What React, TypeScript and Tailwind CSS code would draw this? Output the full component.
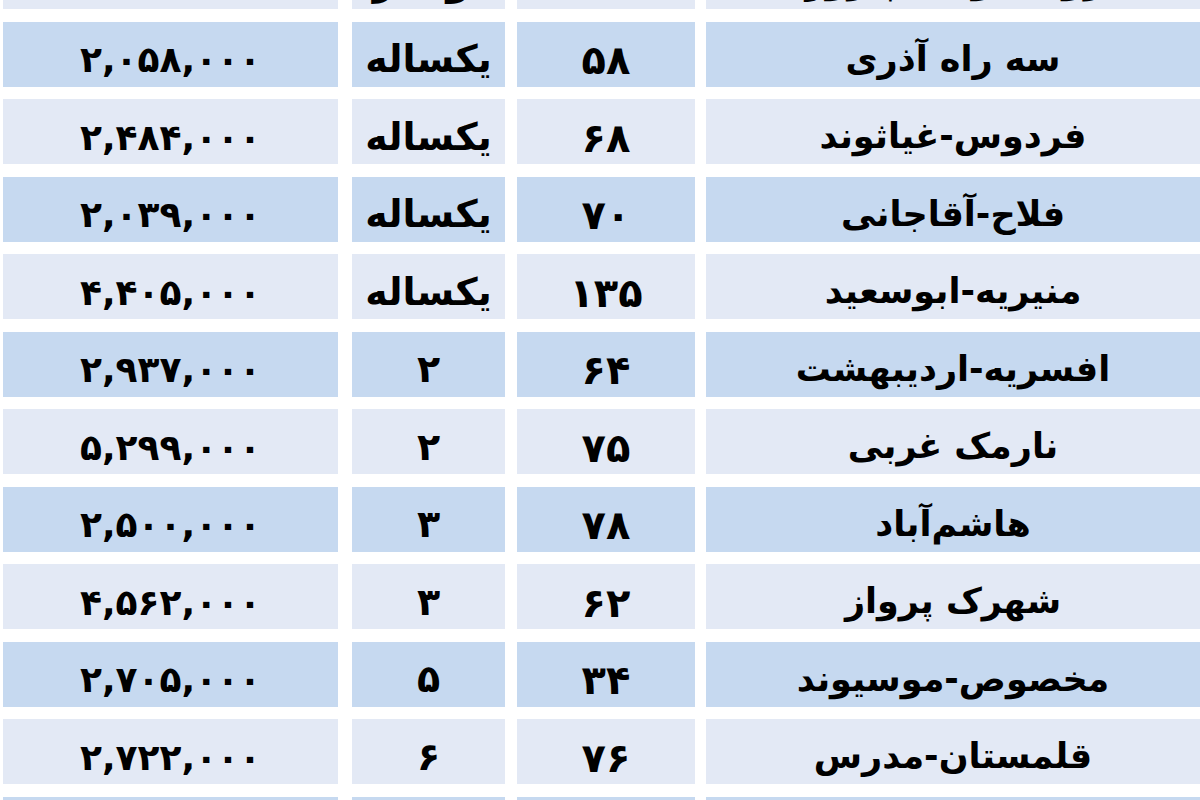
const rows = [
  { price: '۲,۸۱۲,۰۰۰', age: 'نوساز', area: '۸۸', place: 'نیروی هوایی-پیروزی' },
  { price: '۲,۰۵۸,۰۰۰', age: 'یکساله', area: '۵۸', place: 'سه راه آذری' },
  { price: '۲,۴۸۴,۰۰۰', age: 'یکساله', area: '۶۸', place: 'فردوس-غیاثوند' },
  { price: '۲,۰۳۹,۰۰۰', age: 'یکساله', area: '۷۰', place: 'فلاح-آقاجانی' },
  { price: '۴,۴۰۵,۰۰۰', age: 'یکساله', area: '۱۳۵', place: 'منیریه-ابوسعید' },
  { price: '۲,۹۳۷,۰۰۰', age: '۲', area: '۶۴', place: 'افسریه-اردیبهشت' },
  { price: '۵,۲۹۹,۰۰۰', age: '۲', area: '۷۵', place: 'نارمک غربی' },
  { price: '۲,۵۰۰,۰۰۰', age: '۳', area: '۷۸', place: 'هاشم‌آباد' },
  { price: '۴,۵۶۲,۰۰۰', age: '۳', area: '۶۲', place: 'شهرک پرواز' },
  { price: '۲,۷۰۵,۰۰۰', age: '۵', area: '۳۴', place: 'مخصوص-موسیوند' },
  { price: '۲,۷۲۲,۰۰۰', age: '۶', area: '۷۶', place: 'قلمستان-مدرس' },
  { price: '۳,۱۱۰,۰۰۰', age: '۷', area: '۸۰', place: 'تهرانپارس' },
]

export default function App() {
  return (
    <div className="w-[1200px] h-[800px] overflow-hidden bg-white font-['DejaVu_Sans',sans-serif] font-bold text-black">
      <div className="flex flex-col gap-[12.5px] -mt-[56px] pl-[3px]">
        {rows.map((r, i) => {
          const bg = i % 2 === 1 ? 'bg-[#c6d9f0]' : 'bg-[#e3e9f5]'
          return (
            <div key={i} className="flex h-[65px] leading-none">
              <div className={`${bg} w-[335px] flex items-center justify-center pt-[12px] text-[36px] tracking-[-0.5px]`}>
                {r.price}
              </div>
              <div className={`${bg} w-[153px] ml-[14px] flex items-center justify-center pt-[10px] text-[38px]`} dir="rtl">
                {r.age}
              </div>
              <div className={`${bg} w-[178px] ml-[12px] flex items-center justify-center pt-[12px] text-[40px]`}>
                {r.area}
              </div>
              <div className={`${bg} flex-1 ml-[11px] flex items-center justify-center pt-[10px] text-[35px]`} dir="rtl">
                {r.place}
              </div>
            </div>
          )
        })}
      </div>
    </div>
  )
}
